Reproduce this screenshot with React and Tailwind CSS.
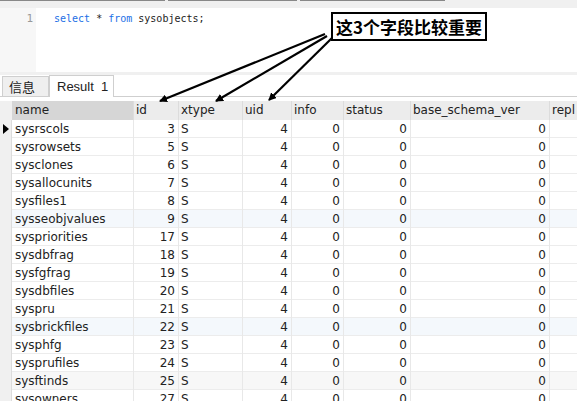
import React from 'react';

const rows = [
  ['sysrscols', 3], ['sysrowsets', 5], ['sysclones', 6], ['sysallocunits', 7],
  ['sysfiles1', 8], ['sysseobjvalues', 9, 'blue'], ['syspriorities', 17], ['sysdbfrag', 18],
  ['sysfgfrag', 19], ['sysdbfiles', 20], ['syspru', 21], ['sysbrickfiles', 22, 'blue'],
  ['sysphfg', 23], ['sysprufiles', 24], ['sysftinds', 25, 'gray'], ['sysowners', 27],
];

const cols = 'grid grid-cols-[12px_122px_45px_64px_49px_52px_67px_139px_60px]';

function Arrows() {
  return (
    <svg className="absolute inset-0 pointer-events-none" width="577" height="401">
      <defs>
        <marker id="ah" markerWidth="8" markerHeight="8" refX="7" refY="4" orient="auto" markerUnits="userSpaceOnUse">
          <path d="M0,0 L8,4 L0,8 z" fill="#000" />
        </marker>
      </defs>
      <g stroke="#000" strokeWidth="2.2" fill="none">
        <line x1="325" y1="34" x2="160" y2="101" markerEnd="url(#ah)" />
        <line x1="327" y1="36" x2="216" y2="101" markerEnd="url(#ah)" />
        <line x1="332" y1="38" x2="269" y2="100" markerEnd="url(#ah)" />
      </g>
    </svg>
  );
}

export default function App() {
  return (
    <div className="relative w-[577px] h-[401px] overflow-hidden bg-white text-[#222]" style={{ fontFamily: '"DejaVu Sans", "Liberation Sans", sans-serif' }}>
      <div className="h-[8px] bg-[#f0f0f0] flex gap-[3px] items-start">
        <div className="w-[165px] h-[1px] bg-[#888]" />
        <div className="w-[129px] h-[1px] bg-[#888]" />
        <div className="w-[145px] h-[1px] bg-[#888]" />
      </div>
      <div className="h-[64px] flex">
        <div className="w-[36px] bg-[#f7f7f7] text-right pr-[3px] pt-[3px] text-[11px] text-[#999]" style={{ fontFamily: '"DejaVu Sans Mono", monospace' }}>1</div>
        <div className="pl-[18px] pt-[3px] text-[10px] leading-[15px]" style={{ fontFamily: '"DejaVu Sans Mono", monospace' }}>
          <span className="text-[#1c6fe6]">select</span> * <span className="text-[#1c6fe6]">from</span> sysobjects;
        </div>
      </div>
      <div className="h-[3px] bg-[#f0f0f0]" />
      <div className="h-[22px] flex items-end border-b border-[#cfcfcf] pl-[2px]">
        <div className="h-[20px] w-[47px] bg-[#efefef] border border-[#cfcfcf] border-b-0 text-[13px] pl-[6px] leading-[20px]" style={{ fontFamily: '"Noto Sans CJK SC", sans-serif' }}>信息</div>
        <div className="h-[22px] w-[65px] bg-white border border-[#cfcfcf] border-b-0 -mb-px text-[13px] pl-[7px] leading-[22px]" style={{ fontFamily: '"Liberation Sans", sans-serif' }}>Result&nbsp;&nbsp;1</div>
      </div>
      <div className="h-[4px]" />
      <div className={`${cols} h-[19px] bg-[#ececec] text-[12px] leading-[19px]`}>
        <div className="bg-[#f0f0f0]" />
        <div className="bg-[#d6d6d6] pl-[3px] border-r border-[#dcdcdc]">name</div>
        <div className="pl-[2px] border-r border-[#dcdcdc]">id</div>
        <div className="pl-[2px] border-r border-[#dcdcdc]">xtype</div>
        <div className="pl-[2px] border-r border-[#dcdcdc]">uid</div>
        <div className="pl-[2px] border-r border-[#dcdcdc]">info</div>
        <div className="pl-[2px] border-r border-[#dcdcdc]">status</div>
        <div className="pl-[2px] border-r border-[#dcdcdc]">base_schema_ver</div>
        <div className="pl-[2px]">repl</div>
      </div>
      {rows.map(([name, id, tint], i) => (
        <div
          key={name}
          className={`${cols} h-[18px] text-[12px] leading-[18px] border-b border-[#ececec] ${tint === 'blue' ? 'bg-[#f4f8fc]' : tint === 'gray' ? 'bg-[#f7f7f7]' : 'bg-white'}`}
        >
          <div className="bg-[#f0f0f0] border-r border-[#dcdcdc] flex items-center justify-center">
            {i === 0 && <div className="w-0 h-0 border-y-[5px] border-y-transparent border-l-[6px] border-l-black" />}
          </div>
          <div className="pl-[3px] border-r border-[#e8e8e8]">{name}</div>
          <div className="text-right pr-[3px] border-r border-[#e8e8e8]">{id}</div>
          <div className="pl-[2px] border-r border-[#e8e8e8]">S</div>
          <div className="text-right pr-[3px] border-r border-[#e8e8e8]">4</div>
          <div className="text-right pr-[3px] border-r border-[#e8e8e8]">0</div>
          <div className="text-right pr-[3px] border-r border-[#e8e8e8]">0</div>
          <div className="text-right pr-[3px] border-r border-[#e8e8e8]">0</div>
          <div />
        </div>
      ))}
      <Arrows />
      <div className="absolute left-[331px] top-[12px] w-[156px] h-[29px] bg-white border-2 border-black flex items-center justify-center text-[17px] font-bold text-black" style={{ fontFamily: '"Noto Sans CJK SC", sans-serif' }}>
        这3个字段比较重要
      </div>
    </div>
  );
}
